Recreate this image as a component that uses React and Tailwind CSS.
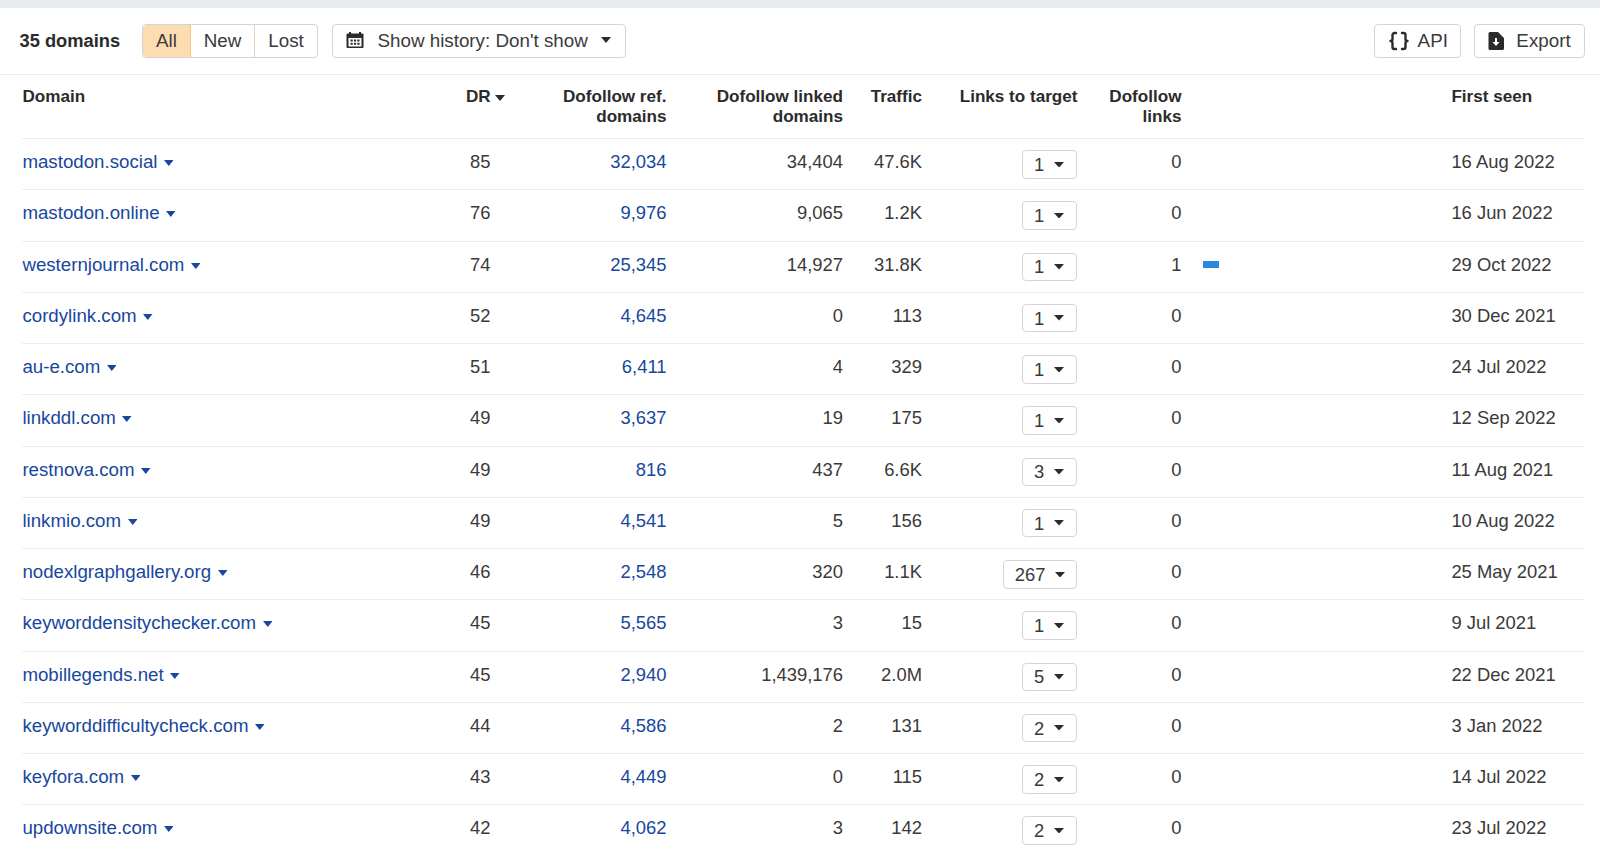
import React from "react";

const rows = [
  ["mastodon.social", "85", "32,034", "34,404", "47.6K", "1", "0", "16 Aug 2022"],
  ["mastodon.online", "76", "9,976", "9,065", "1.2K", "1", "0", "16 Jun 2022"],
  ["westernjournal.com", "74", "25,345", "14,927", "31.8K", "1", "1", "29 Oct 2022"],
  ["cordylink.com", "52", "4,645", "0", "113", "1", "0", "30 Dec 2021"],
  ["au-e.com", "51", "6,411", "4", "329", "1", "0", "24 Jul 2022"],
  ["linkddl.com", "49", "3,637", "19", "175", "1", "0", "12 Sep 2022"],
  ["restnova.com", "49", "816", "437", "6.6K", "3", "0", "11 Aug 2021"],
  ["linkmio.com", "49", "4,541", "5", "156", "1", "0", "10 Aug 2022"],
  ["nodexlgraphgallery.org", "46", "2,548", "320", "1.1K", "267", "0", "25 May 2021"],
  ["keyworddensitychecker.com", "45", "5,565", "3", "15", "1", "0", "9 Jul 2021"],
  ["mobillegends.net", "45", "2,940", "1,439,176", "2.0M", "5", "0", "22 Dec 2021"],
  ["keyworddifficultycheck.com", "44", "4,586", "2", "131", "2", "0", "3 Jan 2022"],
  ["keyfora.com", "43", "4,449", "0", "115", "2", "0", "14 Jul 2022"],
  ["updownsite.com", "42", "4,062", "3", "142", "2", "0", "23 Jul 2022"],
];

function Caret({ className }) {
  return (
    <svg viewBox="0 0 10 6" preserveAspectRatio="none" className={className} fill="currentColor">
      <path d="M0 0h10L5 6z" />
    </svg>
  );
}

function Calendar() {
  return (
    <svg viewBox="0 0 18 18" className="w-[18px] h-[18px] -mt-[1px] text-[#2b2b2b]" fill="currentColor">
      <path fillRule="evenodd" d="M3 1h2v1.500h8V1h2v1.500h1.500A1 1 0 0 1 17.500 3.500v12.500a1 1 0 0 1-1 1h-15a1 1 0 0 1-1-1V3.500a1 1 0 0 1 1-1H3zM2.500 7v8.500h13V7z" />
      <rect x="4.500" y="8.500" width="2.200" height="2" />
      <rect x="7.900" y="8.500" width="2.200" height="2" />
      <rect x="11.300" y="8.500" width="2.200" height="2" />
      <rect x="4.500" y="11.800" width="2.200" height="2" />
      <rect x="7.900" y="11.800" width="2.200" height="2" />
      <rect x="11.300" y="11.800" width="2.200" height="2" />
    </svg>
  );
}

function BracesIcon() {
  return (
    <svg viewBox="0 0 24 24" className="w-6 h-6 text-[#2b2b2b]" fill="none" stroke="currentColor" strokeWidth="2.400" strokeLinecap="round" strokeLinejoin="round">
      <path d="M9 4H7.500a2 2 0 0 0-2 2v4a2 2 0 0 1-2 2 2 2 0 0 1 2 2v4a2 2 0 0 0 2 2H9" />
      <path d="M15 4h1.500a2 2 0 0 1 2 2v4a2 2 0 0 0 2 2 2 2 0 0 0-2 2v4a2 2 0 0 1-2 2H15" />
    </svg>
  );
}

function ExportIcon() {
  return (
    <svg viewBox="0 0 16 18" className="w-4 h-[18px] text-[#2b2b2b]" fill="currentColor">
      <path fillRule="evenodd" d="M2 0h8l6 6v10.500a1.500 1.500 0 0 1-1.500 1.500h-12.500a1.500 1.500 0 0 1-1.500-1.500V1.500A1.500 1.500 0 0 1 2 0zM7 6v4H4.500L8 14l3.500-4H9V6z" />
    </svg>
  );
}

export default function App() {
  return (
    <div className="h-[852px] overflow-hidden bg-white text-[#3a3a3a] text-[18.400px] font-['Liberation_Sans',Arial,sans-serif]">
      <div className="h-2 bg-[#e8ebee]" />
      <div className="h-[67px] flex items-start pt-4 border-b-[1.5px] border-[#eeeeee] text-[18.800px]">
        <div className="ml-[19.500px] w-[122.500px] h-[33px] pt-[1px] flex items-center text-[18.300px] font-bold text-[#2b2b2b]">35 domains</div>
        <div className="w-[176px] h-[33.500px] flex border-[1.5px] border-[#d4d4d4] rounded-[4px] overflow-hidden">
          <div className="w-[48px] pt-[1px] flex items-center justify-center bg-[#fddcb2] border-r border-[#f1c48e]">All</div>
          <div className="w-[64px] pt-[1px] flex items-center justify-center border-r-[1.5px] border-[#d4d4d4]">New</div>
          <div className="flex-1 pt-[1px] flex items-center justify-center">Lost</div>
        </div>
        <div className="ml-[14px] w-[293.500px] h-[33.500px] flex items-center border-[1.5px] border-[#d4d4d4] rounded-[4px] pl-[13px]">
          <Calendar />
          <span className="ml-[13.500px] pt-[1px]">Show history: Don't show</span>
          <Caret className="w-[10px] h-[6px] ml-[13px] -mt-[2px] text-[#2b2b2b]" />
        </div>
        <div className="ml-auto w-[87px] h-[33.500px] flex items-center justify-center gap-[6.500px] border-[1.5px] border-[#d4d4d4] rounded-[4px]">
          <BracesIcon />
          <span className="pt-[1px]">API</span>
        </div>
        <div className="ml-[13px] mr-[15px] w-[111px] h-[33.500px] flex items-center justify-center gap-[12px] border-[1.5px] border-[#d4d4d4] rounded-[4px]">
          <ExportIcon />
          <span className="pt-[1px]">Export</span>
        </div>
      </div>

      <div className="ml-[22.400px] mr-[16px]">
        <div className="h-[64px] flex pt-[11.500px] text-[17.100px] leading-[20.500px] font-bold text-[#2b2b2b] border-b-[1.5px] border-[#eeeeee]">
          <div className="w-[443.600px]">Domain</div>
          <div className="w-[60px] flex items-start gap-[4.500px]">DR<Caret className="w-[10px] h-[6px] mt-[8px]" /></div>
          <div className="w-[140.500px] text-right">Dofollow ref.<br />domains</div>
          <div className="w-[176.500px] text-right">Dofollow linked<br />domains</div>
          <div className="w-[79px] text-right">Traffic</div>
          <div className="w-[155.500px] text-right">Links to target</div>
          <div className="w-[104px] text-right">Dofollow<br />links</div>
          <div className="w-[269.900px]" />
          <div>First seen</div>
        </div>

        {rows.map((r) => (
          <div key={r[0]} className="h-[51.250px] flex pt-[11px] leading-[24px] border-b-[1.5px] border-[#eeeeee]">
            <div className="w-[443.600px] flex items-start text-[#17479e] text-[18.700px]">
              <span>{r[0]}</span>
              <Caret className="w-[9.500px] h-[6px] ml-[6.500px] mt-[10px]" />
            </div>
            <div className="w-[60px] pl-[4px]">{r[1]}</div>
            <div className="w-[140.500px] text-right text-[#17479e]">{r[2]}</div>
            <div className="w-[176.500px] text-right">{r[3]}</div>
            <div className="w-[79px] text-right">{r[4]}</div>
            <div className="w-[155.500px] flex justify-end">
              <div className="h-[28.500px] pl-[11px] pr-[11px] min-w-[55.500px] flex items-center gap-[10px] border-[1.5px] border-[#d4d4d4] rounded-[4px]">
                <span className="pt-[1px]">{r[5]}</span>
                <Caret className="w-[10px] h-[5.500px] text-[#2b2b2b]" />
              </div>
            </div>
            <div className="w-[104px] text-right">{r[6]}</div>
            <div className="w-[269.900px] pl-[21.500px]">
              {r[6] === "1" && <div className="w-[16.500px] h-[7px] mt-[8px] bg-[#2e86de]" />}
            </div>
            <div>{r[7]}</div>
          </div>
        ))}
      </div>
    </div>
  );
}
